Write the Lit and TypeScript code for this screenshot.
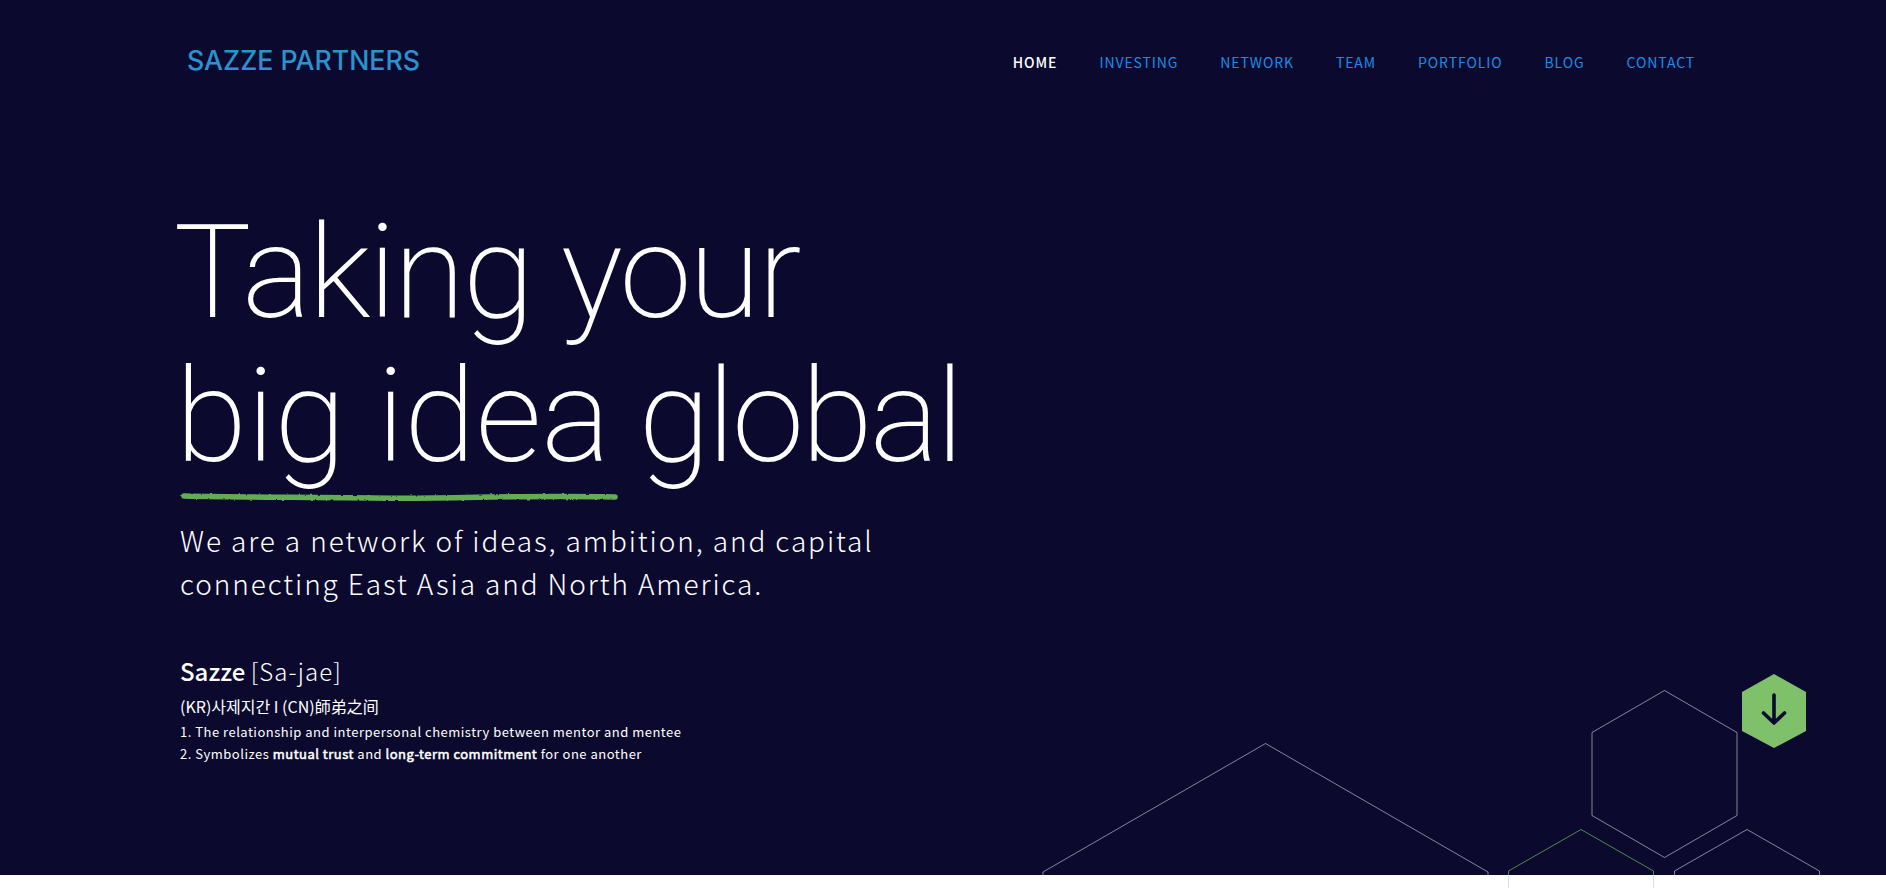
import { LitElement, html, css, svg } from "lit";
import { customElement } from "lit/decorators.js";

const SANS = css`"Noto Sans CJK KR", "Noto Sans CJK SC", "Noto Sans", sans-serif`;

@customElement("app-root")
export class AppRoot extends LitElement {
  static styles = css`
    :host { display: block; background: #fff; height: 888px; overflow: hidden; font-family: ${SANS}; }
    .hero { position: relative; height: 875px; background: #0b0a2e; color: #fff; display: flex; flex-direction: column; padding: 0 0 0 178px; box-sizing: border-box; }
    header { display: flex; justify-content: space-between; align-items: center; height: 124px; padding: 0 191px 0 9px; }
    .logo { font-family: "Inter", sans-serif; font-size: 26.7px; font-weight: 500; color: #2a93cf; margin-top: -5px; }
    nav { display: flex; gap: 42px; font-size: 14px; letter-spacing: .9px; color: #1e8ae6; }
    nav .active { color: #fff; font-weight: 500; }
    h1 { margin: 77px 0 0 -2.4px; font-family: "Roboto", sans-serif; font-weight: 200; font-size: 130px; line-height: 144px; letter-spacing: -2.9px; }
    .first { display: inline-block; margin-left: -1.8px; letter-spacing: -2.4px; }
    .mark { position: relative; display: inline-block; letter-spacing: -.3px; }
    .scribble { position: absolute; left: 6px; bottom: -13px; width: 436px; height: 12px; overflow: visible; }
    .lede { margin: 30px 0 0; padding-left: 2px; font-size: 28px; font-weight: 300; line-height: 43px; letter-spacing: 1.9px; }
    .term { margin: 48px 0 0; padding-left: 2px; font-size: 24px; line-height: 36px; }
    .term b { font-weight: 500; }
    .term span { font-weight: 300; letter-spacing: 1.1px; }
    .kr { margin: 5px 0 0; padding-left: 2px; font-size: 16px; line-height: 24px; }
    .defs { margin: 3px 0 0; padding-left: 2px; font-size: 13px; line-height: 22px; letter-spacing: .5px; }
    .defs b { font-weight: 400; -webkit-text-stroke: .5px #fff; }
    .shapes { position: absolute; left: 0; top: 0; width: 1886px; height: 888px; pointer-events: none; }
    .page { position: relative; }
    .arrow { position: absolute; left: 1742px; top: 674px; width: 64px; height: 74px; }
  `;

  render() {
    const gray = "rgba(255,255,255,.5)";
    const hex = (cx: number, top: number, hw: number, sh: number, bot: number, c: string) =>
      svg`<polyline fill="none" stroke=${c} stroke-width="1" points="${cx - hw},${bot} ${cx - hw},${top + sh} ${cx},${top} ${cx + hw},${top + sh} ${cx + hw},${bot}"/>`;
    return html`
      <div class="page">
        <section class="hero">
          <header>
            <div class="logo">SAZZE PARTNERS</div>
            <nav>
              <span class="active">HOME</span><span>INVESTING</span><span>NETWORK</span><span>TEAM</span><span>PORTFOLIO</span><span>BLOG</span><span>CONTACT</span>
            </nav>
          </header>
          <h1><span class="first">Taking your</span><br /><span class="mark">big idea<svg class="scribble" viewBox="0 0 436 12"><defs><filter id="rough" x="-5%" y="-100%" width="110%" height="300%"><feTurbulence type="fractalNoise" baseFrequency="0.25" numOctaves="3" seed="3"/><feDisplacementMap in="SourceGraphic" scale="2.5"/><feGaussianBlur stdDeviation=".5"/></filter></defs><path d="M2 6 C60 7.5 120 7 190 8 S330 5 433 7" fill="none" stroke="#62ad52" stroke-width="5.5" stroke-linecap="round" filter="url(#rough)"/></svg></span> global</h1>
          <p class="lede">We are a network of ideas, ambition, and capital<br />connecting East Asia and North America.</p>
          <p class="term"><b>Sazze</b> <span>[Sa-jae]</span></p>
          <p class="kr">(KR)사제지간 I (CN)師弟之间</p>
          <p class="defs">1. The relationship and interpersonal chemistry between mentor and mentee<br />2. Symbolizes <b>mutual trust</b> and <b>long-term commitment</b> for one another</p>
          <svg class="arrow" viewBox="0 0 64 74"><polygon points="32,0 64,18 64,57 32,74 0,57 0,18" fill="#7fc06a"/><path d="M32 21V48M21.5 39L32 49L42.5 39" fill="none" stroke="#0b0a2e" stroke-width="3.6" stroke-linecap="round" stroke-linejoin="round"/></svg>
        </section>
        <svg class="shapes" viewBox="0 0 1886 888">
          ${hex(1265.5, 743.5, 222.5, 128.5, 888, gray)}
          ${hex(1664.5, 690.5, 72.5, 42, 815.5, gray)}
          <polyline fill="none" stroke=${gray} points="1592,815.5 1664.5,857.5 1737,815.5"/>
          ${hex(1581, 829.5, 72.5, 41.5, 888, "#4a8a45")}
          ${hex(1747, 829.5, 72.5, 41.5, 888, gray)}
          <rect x="1000" y="875" width="886" height="13" fill="#fff" fill-opacity=".78"/>
        </svg>
      </div>
    `;
  }
}
